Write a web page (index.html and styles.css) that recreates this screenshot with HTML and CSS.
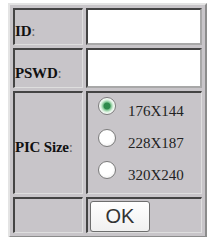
FILE: index.html
```html
<!DOCTYPE html>
<html>
<head>
  <title>Camera Login</title>
  <meta name="viewport" content="width=device-width, initial-scale=1.0" />
  <link rel="stylesheet" href="styles.css">
</head>
<body>
  <table class="login">
    <tr class="row-id">
      <th class="label">ID<span class="colon">:</span></th>
      <td class="field"><input type="text" name="id" /></td>
    </tr>
    <tr class="row-pswd">
      <th class="label">PSWD<span class="colon">:</span></th>
      <td class="field"><input type="password" name="pswd" /></td>
    </tr>
    <tr class="row-size">
      <th class="label">PIC Size<span class="colon">:</span></th>
      <td class="sizes">
        <label class="opt"><input type="radio" name="size" value="176x144" checked /><span>176X144</span></label>
        <label class="opt"><input type="radio" name="size" value="228x187" /><span>228X187</span></label>
        <label class="opt"><input type="radio" name="size" value="320x240" /><span>320X240</span></label>
      </td>
    </tr>
    <tr class="row-ok">
      <td class="label"></td>
      <td class="action"><button type="submit">OK</button></td>
    </tr>
  </table>
</body>
</html>
```

FILE: styles.css
```css
body { margin: 3px 0 0 8px; background: #fff; font-family: "Liberation Serif", serif; }

.login {
  border-collapse: separate; border-spacing: 3px;
  background: #c8c5c9;
  border: 2px solid; border-color: #e4e4e4 #8c8c8c #8c8c8c #e4e4e4;
}
.login th, .login td {
  box-sizing: border-box; padding: 0;
  border-style: solid; border-width: 2px 1px 1px 2px;
  border-color: #444 #dedede #dedede #444;
}

.label {
  width: 70px; text-align: left; vertical-align: middle;
  padding-top: 9px !important;
  font-size: 15px; font-weight: bold; color: #111;
  letter-spacing: -0.2px;
}
.colon { font-weight: normal; color: #666; }

.row-id > * { height: 37px; }
.row-pswd > * { height: 40px; }
.row-size > * { height: 98px; }
.row-ok > * { height: 36px; }

.field {
  width: 116px; background: #fff;
  border-width: 2px !important;
  border-color: #444 #a8a8a8 #a8a8a8 #444 !important;
}
.field input {
  display: block; width: 100%; box-sizing: border-box;
  border: 0; background: transparent; outline: none;
  font: 14px "Liberation Serif", serif; padding: 0 4px;
}

.sizes { vertical-align: top; padding: 4px 0 0 10px !important; }
.opt { display: flex; align-items: flex-start; gap: 12px; height: 18px; margin-bottom: 14px; }
.opt span { padding-top: 5px; font-size: 15px; line-height: 18px; color: #222; }
.opt input {
  appearance: none; margin: 0; flex: none;
  width: 18px; height: 18px; border-radius: 50%;
  border: 1px solid #7c7c7c;
  background: radial-gradient(circle at 45% 40%, #fff 0 50%, #e6e6e6 100%);
}
.opt input:checked {
  background: radial-gradient(circle, #2f8a4c 0 3px, #7fc592 4px, #d7efdb 6px, #fff 8px);
}

.action { vertical-align: top; padding: 2px 0 0 2px !important; }
.action button {
  width: 60px; height: 31px; padding: 0;
  background: linear-gradient(#fff, #f0f0f0);
  border: 1px solid #6e6e6e; border-radius: 3px;
  font: 20px "Liberation Sans", sans-serif; color: #333;
}
```
